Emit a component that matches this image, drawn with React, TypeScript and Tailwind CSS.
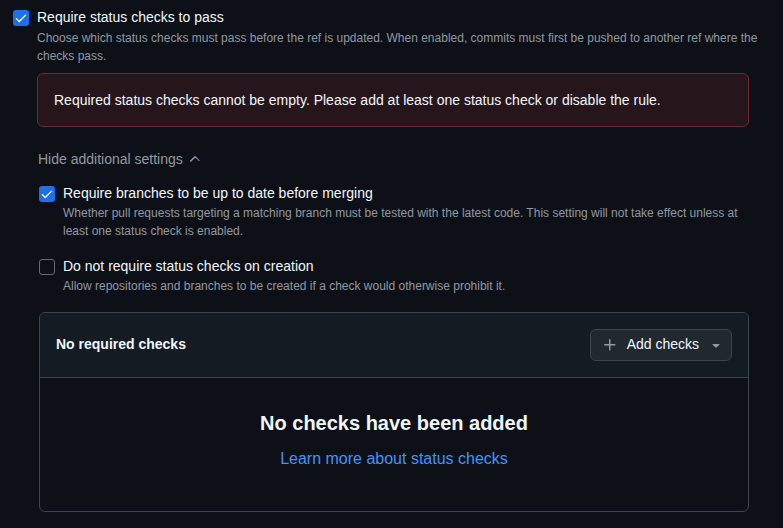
import React from "react";

function CheckIcon() {
  return (
    <svg width="14" height="14" viewBox="0 0 16 16" fill="#ffffff">
      <path d="M13.78 4.22a.75.75 0 0 1 0 1.06l-7.25 7.25a.75.75 0 0 1-1.06 0L2.22 9.28a.751.751 0 0 1 .018-1.042.751.751 0 0 1 1.042-.018L6 10.94l6.72-6.72a.75.75 0 0 1 1.06 0Z" />
    </svg>
  );
}

function Checkbox({ checked }: { checked: boolean }) {
  return checked ? (
    <div className="w-4 h-4 rounded-[3px] bg-[#1f6feb] flex items-center justify-center shrink-0">
      <CheckIcon />
    </div>
  ) : (
    <div className="w-4 h-4 rounded-[3px] border border-[#656c76] bg-[#0d1117] shrink-0" />
  );
}

export default function App() {
  return (
    <div
      className="w-[783px] h-[528px] bg-[#0d1117] text-[#f0f6fc] overflow-hidden"
      style={{ fontFamily: '"Liberation Sans", Arial, sans-serif' }}
    >
      <div className="pl-[13px] pt-[7px] w-[760px]">
        {/* Row 1 */}
        <div className="flex gap-2">
          <div className="pt-[3px]">
            <Checkbox checked />
          </div>
          <div className="flex-1">
            <div className="text-[14px] leading-[20px]">Require status checks to pass</div>
            <div className="mt-[2px] text-[12px] leading-[18px] text-[#9198a1]">
              Choose which status checks must pass before the ref is updated. When enabled, commits must first be pushed to another ref where the checks pass.
            </div>
            <div className="mt-[8px] w-[712px] rounded-[6px] border border-[#6b2b2b] bg-[#26161b] px-4 py-4 text-[14px] leading-[20px]">
              Required status checks cannot be empty. Please add at least one status check or disable the rule.
            </div>
            <div className="mt-[22px] flex items-center text-[14px] leading-[20px] text-[#9198a1] pl-px">
              <span>Hide additional settings</span>
              <svg className="ml-[4px]" width="16" height="16" viewBox="0 0 16 16" fill="#9198a1">
                <path d="M3.22 10.53a.749.749 0 0 1 0-1.06l4.25-4.25a.749.749 0 0 1 1.06 0l4.25 4.25a.749.749 0 0 1-1.275.326.749.749 0 0 1-.215-.734L8 6.81 4.28 10.53a.749.749 0 0 1-1.06 0Z" />
              </svg>
            </div>
          </div>
        </div>

        {/* Row 2 */}
        <div className="pl-[26px] mt-[14px] flex gap-2">
          <div className="pt-[3px]">
            <Checkbox checked />
          </div>
          <div className="flex-1">
            <div className="text-[14px] leading-[20px]">Require branches to be up to date before merging</div>
            <div className="mt-[1px] text-[12px] leading-[18px] text-[#9198a1]">
              Whether pull requests targeting a matching branch must be tested with the latest code. This setting will not take effect unless at least one status check is enabled.
            </div>
          </div>
        </div>

        {/* Row 3 */}
        <div className="pl-[26px] mt-[16px] flex gap-2">
          <div className="pt-[3px]">
            <Checkbox checked={false} />
          </div>
          <div className="flex-1">
            <div className="text-[14px] leading-[20px]">Do not require status checks on creation</div>
            <div className="mt-[1px] text-[12px] leading-[18px] text-[#9198a1]">
              Allow repositories and branches to be created if a check would otherwise prohibit it.
            </div>
          </div>
        </div>

        {/* Checks box */}
        <div className="ml-[26px] mt-[17px] w-[710px] rounded-[6px] border border-[#3d444d]">
          <div className="flex items-center justify-between bg-[#151b23] rounded-t-[6px] border-b border-[#3d444d] pl-4 pr-4 py-4">
            <div className="text-[14px] leading-[20px] font-bold -mt-[2px]">No required checks</div>
            <div className="h-8 flex items-center rounded-[6px] border border-[#3d444d] bg-[#212830] pl-[11px] pr-[7px]">
              <svg width="16" height="16" viewBox="0 0 16 16" fill="#9198a1">
                <path d="M7.75 2a.75.75 0 0 1 .75.75V7h4.25a.75.75 0 0 1 0 1.5H8.5v4.25a.75.75 0 0 1-1.5 0V8.5H2.75a.75.75 0 0 1 0-1.5H7V2.75A.75.75 0 0 1 7.75 2Z" />
              </svg>
              <span className="ml-[9px] text-[14px] leading-[20px] -mt-[2px]">Add checks</span>
              <svg className="ml-[9px]" width="16" height="16" viewBox="0 0 16 16" fill="#9198a1">
                <path d="m4.427 7.427 3.396 3.396a.25.25 0 0 0 .354 0l3.396-3.396A.25.25 0 0 0 11.396 7H4.604a.25.25 0 0 0-.177.427Z" />
              </svg>
            </div>
          </div>
          <div className="flex flex-col items-center pt-[30px] pb-[40px]">
            <div className="text-[20px] leading-[30px] font-bold">No checks have been added</div>
            <div className="mt-[9px] text-[16px] leading-[24px] text-[#4493f8]">Learn more about status checks</div>
          </div>
        </div>
      </div>
    </div>
  );
}
